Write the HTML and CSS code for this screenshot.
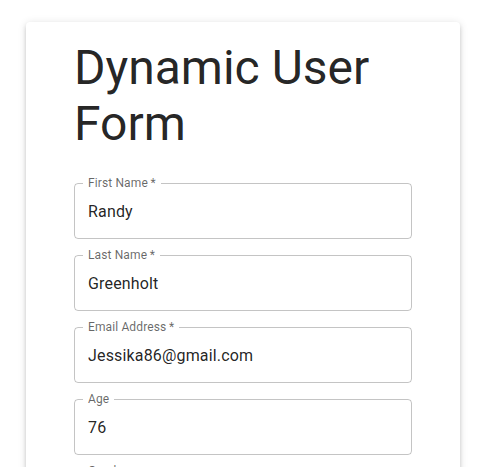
FILE: index.html
```html
<!DOCTYPE html>
<html lang="en">
<head>
<meta charset="utf-8">
<title>Dynamic User Form</title>
<link rel="stylesheet" href="styles.css">
</head>
<body>
<div class="page">
  <form class="card">
    <h1 class="title">Dynamic User Form</h1>
    <div class="fields">
      <div class="field">
        <label class="field-label" for="first">First Name&thinsp;*</label>
        <input class="field-input" id="first" type="text" value="Randy">
      </div>
      <div class="field">
        <label class="field-label" for="last">Last Name&thinsp;*</label>
        <input class="field-input" id="last" type="text" value="Greenholt">
      </div>
      <div class="field">
        <label class="field-label" for="email">Email Address&thinsp;*</label>
        <input class="field-input" id="email" type="text" value="Jessika86@gmail.com">
      </div>
      <div class="field">
        <label class="field-label" for="age">Age</label>
        <input class="field-input" id="age" type="text" value="76">
      </div>
      <div class="field">
        <label class="field-label" for="gender">Gender</label>
        <input class="field-input" id="gender" type="text" value="Male">
      </div>
    </div>
  </form>
</div>
</body>
</html>
```
FILE: styles.css
```css
html, body {
  margin: 0;
  padding: 0;
  background: #fff;
}
body {
  font-family: Roboto, "Liberation Sans", Arial, sans-serif;
  color: rgba(0, 0, 0, 0.87);
}
.page {
  padding: 22px 20px 0 26px;
}
.card {
  display: block;
  width: 434px;
  box-sizing: border-box;
  padding: 18px 48px 24px;
  background: #fff;
  border-radius: 4px;
  box-shadow: 0px 3px 3px -2px rgba(0,0,0,0.2), 0px 3px 4px 0px rgba(0,0,0,0.14), 0px 1px 8px 0px rgba(0,0,0,0.12);
}
.title {
  margin: 0 0 31px;
  font-size: 48px;
  font-weight: 400;
  line-height: 56px;
  letter-spacing: 0;
  color: rgba(0, 0, 0, 0.87);
}
.fields {
  display: flex;
  flex-direction: column;
  gap: 16px;
}
.field {
  position: relative;
  height: 56px;
  box-sizing: border-box;
  border: 1px solid rgba(0, 0, 0, 0.23);
  border-radius: 4px;
}
.field-label {
  position: absolute;
  top: -9px;
  left: 8px;
  padding: 0 5px;
  background: #fff;
  font-size: 12px;
  line-height: 17px;
  letter-spacing: 0.01em;
  color: rgba(0, 0, 0, 0.6);
}
.field-input {
  display: block;
  width: 100%;
  height: 100%;
  box-sizing: border-box;
  margin: 0;
  padding: 15.5px 13px;
  border: 0;
  background: transparent;
  outline: none;
  font-family: inherit;
  font-size: 16px;
  line-height: 23px;
  letter-spacing: 0.01em;
  color: rgba(0, 0, 0, 0.87);
}
```
